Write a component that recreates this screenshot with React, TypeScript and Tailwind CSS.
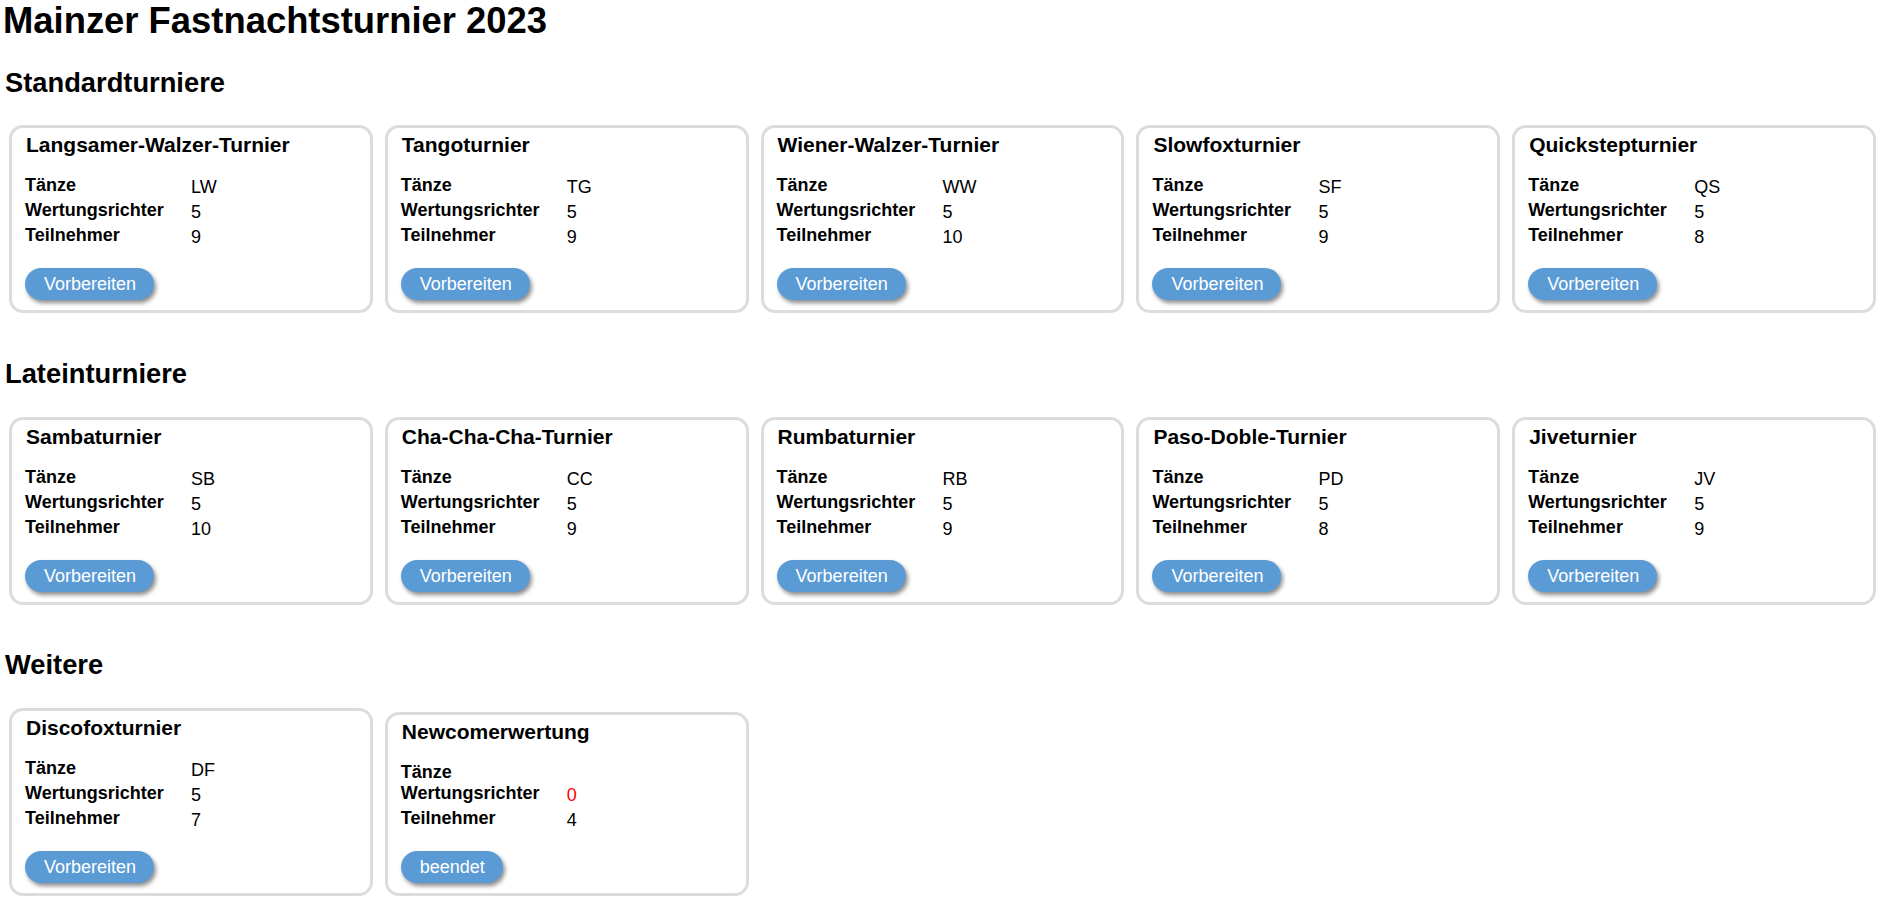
import React from "react";

type Turnier = {
  name: string;
  taenze: string;
  richter: number;
  teilnehmer: number;
  action?: string;
};

const standard: Turnier[] = [
  { name: "Langsamer-Walzer-Turnier", taenze: "LW", richter: 5, teilnehmer: 9 },
  { name: "Tangoturnier", taenze: "TG", richter: 5, teilnehmer: 9 },
  { name: "Wiener-Walzer-Turnier", taenze: "WW", richter: 5, teilnehmer: 10 },
  { name: "Slowfoxturnier", taenze: "SF", richter: 5, teilnehmer: 9 },
  { name: "Quickstepturnier", taenze: "QS", richter: 5, teilnehmer: 8 },
];

const latein: Turnier[] = [
  { name: "Sambaturnier", taenze: "SB", richter: 5, teilnehmer: 10 },
  { name: "Cha-Cha-Cha-Turnier", taenze: "CC", richter: 5, teilnehmer: 9 },
  { name: "Rumbaturnier", taenze: "RB", richter: 5, teilnehmer: 9 },
  { name: "Paso-Doble-Turnier", taenze: "PD", richter: 5, teilnehmer: 8 },
  { name: "Jiveturnier", taenze: "JV", richter: 5, teilnehmer: 9 },
];

const weitere: Turnier[] = [
  { name: "Discofoxturnier", taenze: "DF", richter: 5, teilnehmer: 7 },
  { name: "Newcomerwertung", taenze: "", richter: 0, teilnehmer: 4, action: "beendet" },
];

function Row({ label, value, red }: { label: string; value: string; red?: boolean }) {
  return (
    <div className="flex items-start">
      <div className="w-[166px] shrink-0 font-bold leading-[21px]">{label}</div>
      {value !== "" && (
        <div className={`pt-[2px] pb-[2px] leading-[21px] ${red ? "text-[#ff0000]" : ""}`}>
          {value}
        </div>
      )}
    </div>
  );
}

function Card({ t }: { t: Turnier }) {
  return (
    <div className="border-[3px] border-[#dcdcdc] rounded-[14px] bg-white px-[13px] pt-[5px] pb-[10px]">
      <h3 className="text-[21px] font-bold leading-[24px] pl-[1px]">{t.name}</h3>
      <div className="mt-[18px] text-[18px]">
        <Row label="Tänze" value={t.taenze} />
        <Row label="Wertungsrichter" value={String(t.richter)} red={t.richter === 0} />
        <Row label="Teilnehmer" value={String(t.teilnehmer)} />
      </div>
      <button
        type="button"
        className="mt-[18px] h-[32px] rounded-full bg-[#5b9bd5] pl-[19px] pr-[18px] text-[18px] leading-[32px] text-white shadow-[2px_3px_4px_rgba(0,0,0,0.45)]"
      >
        {t.action ?? "Vorbereiten"}
      </button>
    </div>
  );
}

function Section({ title, items, spacing }: { title: string; items: Turnier[]; spacing: string }) {
  return (
    <section>
      <h2 className={`pl-[5px] text-[27.3px] font-bold leading-[31px] ${spacing}`}>{title}</h2>
      <div className="grid grid-cols-5 items-end gap-[12px] pl-[9px] pr-[4px]">
        {items.map((t) => (
          <Card key={t.name} t={t} />
        ))}
      </div>
    </section>
  );
}

export default function App() {
  return (
    <div className="h-screen overflow-hidden bg-white text-black font-['Liberation_Sans',Arial,sans-serif]">
      <h1 className="pl-[3px] text-[36.4px] font-bold leading-[41px]">Mainzer Fastnachtsturnier 2023</h1>
      <Section title="Standardturniere" items={standard} spacing="mt-[26px] mb-[27px]" />
      <Section title="Lateinturniere" items={latein} spacing="mt-[45px] mb-[28px]" />
      <Section title="Weitere" items={weitere} spacing="mt-[44px] mb-[28px]" />
    </div>
  );
}
